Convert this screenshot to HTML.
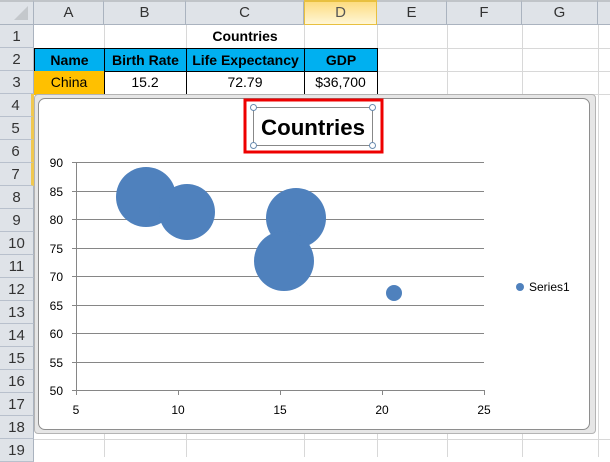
<!DOCTYPE html>
<html><head><style>
body{margin:0;width:610px;height:457px;overflow:hidden;background:#fff;font-family:"Liberation Sans",sans-serif;position:relative}
.a{position:absolute;box-sizing:border-box}
.ch{top:0;height:25px;background:#dfe3e8;border-right:1px solid #aab3bf;border-bottom:1px solid #aab3bf;border-top:2px solid #c0c4c8;font-size:15px;color:#333;text-align:center;line-height:22px}
.rh{left:0;width:34px;height:23px;background:#dfe3e8;border-bottom:1px solid #b8c0cc;border-right:1px solid #aab3bf;font-size:15px;color:#333;text-align:center;line-height:23px}
.c{font-size:14px;text-align:center;line-height:22px;height:24px;color:#000}
</style></head><body>
<svg class="a" style="left:0;top:0" width="610" height="457">
<g stroke="#d8d8d8" stroke-width="1">
<line x1="104.5" y1="25" x2="104.5" y2="457"/><line x1="186.5" y1="25" x2="186.5" y2="457"/><line x1="304.5" y1="25" x2="304.5" y2="457"/><line x1="377.5" y1="25" x2="377.5" y2="457"/><line x1="447.5" y1="25" x2="447.5" y2="457"/><line x1="522.5" y1="25" x2="522.5" y2="457"/><line x1="598.5" y1="25" x2="598.5" y2="457"/>
<line x1="34" y1="48.5" x2="610" y2="48.5"/><line x1="34" y1="71.5" x2="610" y2="71.5"/><line x1="34" y1="94.5" x2="610" y2="94.5"/><line x1="34" y1="439.5" x2="610" y2="439.5"/>
</g></svg>
<div class="a ch" style="left:0;width:34px"><svg width="30" height="20"><polygon points="26,4 26,18 12,18" fill="#c4c8cc"/></svg></div>
<div class="a ch" style="left:34px;width:70px">A</div>
<div class="a ch" style="left:104px;width:82px">B</div>
<div class="a ch" style="left:186px;width:118px">C</div>
<div class="a ch" style="left:304px;width:73px;background:linear-gradient(#fddc80,#fff6d6);border:1px solid #e8c040;border-top:2px solid #e8c040;color:#555">D</div>
<div class="a ch" style="left:377px;width:70px">E</div>
<div class="a ch" style="left:447px;width:75px">F</div>
<div class="a ch" style="left:522px;width:76px">G</div>
<div class="a ch" style="left:598px;width:12px;border-right:none"></div>
<div class="a rh" style="top:25px">1</div><div class="a rh" style="top:48px">2</div><div class="a rh" style="top:71px">3</div><div class="a rh" style="top:94px;border-right:3px solid #f0c850">4</div><div class="a rh" style="top:117px;border-right:3px solid #f0c850">5</div><div class="a rh" style="top:140px;border-right:3px solid #f0c850">6</div><div class="a rh" style="top:163px;border-right:3px solid #f0c850">7</div><div class="a rh" style="top:186px">8</div><div class="a rh" style="top:209px">9</div><div class="a rh" style="top:232px">10</div><div class="a rh" style="top:255px">11</div><div class="a rh" style="top:278px">12</div><div class="a rh" style="top:301px">13</div><div class="a rh" style="top:324px">14</div><div class="a rh" style="top:347px">15</div><div class="a rh" style="top:370px">16</div><div class="a rh" style="top:393px">17</div><div class="a rh" style="top:416px">18</div><div class="a rh" style="top:439px">19</div>
<div class="a c" style="left:186px;top:25px;width:118px;font-weight:bold">Countries</div>
<div class="a c" style="left:34px;top:48px;width:71px;background:#00b0f0;border:1px solid #000;font-weight:bold">Name</div>
<div class="a c" style="left:104px;top:48px;width:83px;background:#00b0f0;border:1px solid #000;font-weight:bold">Birth Rate</div>
<div class="a c" style="left:186px;top:48px;width:119px;background:#00b0f0;border:1px solid #000;font-weight:bold">Life Expectancy</div>
<div class="a c" style="left:304px;top:48px;width:74px;background:#00b0f0;border:1px solid #000;font-weight:bold">GDP</div>
<div class="a c" style="left:34px;top:71px;width:71px;background:#ffc000;border-right:1px solid #000">China</div>
<div class="a c" style="left:104px;top:71px;width:83px;border-right:1px solid #000">15.2</div>
<div class="a c" style="left:186px;top:71px;width:119px;border-right:1px solid #000">72.79</div>
<div class="a c" style="left:304px;top:71px;width:74px;border-right:1px solid #000">$36,700</div>
<div class="a" style="left:34px;top:94px;width:562px;height:340px;background:#e6e6e6;border:1px solid #b4b4b4;border-radius:4px"></div>
<div class="a" style="left:38px;top:98px;width:552px;height:332px;background:#fff;border:1px solid #8e8e8e;border-radius:7px"></div>
<svg class="a" style="left:0;top:0" width="610" height="457" font-family="Liberation Sans, sans-serif">
<g stroke="#868686" stroke-width="1">
<line x1="72" y1="162.5" x2="484" y2="162.5"/><line x1="72" y1="191.5" x2="484" y2="191.5"/><line x1="72" y1="219.5" x2="484" y2="219.5"/><line x1="72" y1="248.5" x2="484" y2="248.5"/><line x1="72" y1="276.5" x2="484" y2="276.5"/><line x1="72" y1="305.5" x2="484" y2="305.5"/><line x1="72" y1="333.5" x2="484" y2="333.5"/><line x1="72" y1="362.5" x2="484" y2="362.5"/><line x1="72" y1="390.5" x2="484" y2="390.5"/>
<line x1="76.5" y1="162" x2="76.5" y2="395"/>
<line x1="178.5" y1="390" x2="178.5" y2="395"/><line x1="280.5" y1="390" x2="280.5" y2="395"/><line x1="382.5" y1="390" x2="382.5" y2="395"/><line x1="484.5" y1="390" x2="484.5" y2="395"/>
</g>
<g font-size="12" fill="#000" text-anchor="end">
<text x="63" y="167">90</text><text x="63" y="196">85</text><text x="63" y="224">80</text><text x="63" y="253">75</text><text x="63" y="281">70</text><text x="63" y="310">65</text><text x="63" y="338">60</text><text x="63" y="367">55</text><text x="63" y="395">50</text>
</g>
<g font-size="12" fill="#000" text-anchor="middle">
<text x="76" y="414">5</text><text x="178" y="414">10</text><text x="280" y="414">15</text><text x="382" y="414">20</text><text x="484" y="414">25</text>
</g>
<g fill="#4f81bd">
<circle cx="146" cy="197" r="30"/><circle cx="187" cy="212" r="28"/><circle cx="296" cy="218" r="30"/><circle cx="284" cy="261" r="30"/><circle cx="394" cy="293" r="8"/>
<circle cx="520" cy="287" r="4"/>
</g>
<text x="529" y="291" font-size="12">Series1</text>
<rect x="245" y="100" width="137" height="52" fill="none" stroke="#e00" stroke-width="3"/>
<rect x="253.5" y="107.5" width="119" height="38" fill="#fff" stroke="#888"/>
<text x="313" y="135" font-size="22" font-weight="bold" text-anchor="middle" textLength="104" lengthAdjust="spacingAndGlyphs">Countries</text>
<g fill="#fff" stroke="#6a8cb0"><circle cx="253.5" cy="107.5" r="3"/><circle cx="372.5" cy="107.5" r="3"/><circle cx="253.5" cy="145.5" r="3"/><circle cx="372.5" cy="145.5" r="3"/></g>
</svg>
</body></html>
